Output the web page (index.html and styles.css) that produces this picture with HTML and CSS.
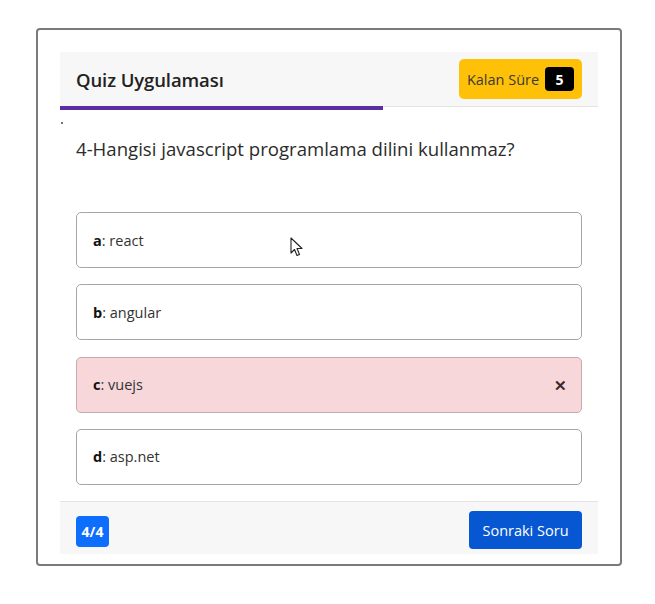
FILE: index.html
```html
<!DOCTYPE html>
<html lang="tr">
<head>
<meta charset="utf-8">
<title>Quiz Uygulaması</title>
<link rel="stylesheet" href="styles.css">
</head>
<body>
<div class="frame">
  <div class="card">
    <div class="card-header">
      <h1 class="title">Quiz Uygulaması</h1>
      <div class="timer">Kalan Süre <span class="timer-num">5</span></div>
    </div>
    <div class="progress"><div class="progress-bar" style="width: 60%"></div></div>
    <div class="card-body">
      <span class="dot"></span>
      <h2 class="question">4-Hangisi javascript programlama dilini kullanmaz?</h2>
      <div class="options">
        <div class="option"><span><b>a</b>: react</span></div>
        <div class="option"><span><b>b</b>: angular</span></div>
        <div class="option option-wrong"><span><b>c</b>: vuejs</span><span class="cross">✕</span></div>
        <div class="option"><span><b>d</b>: asp.net</span></div>
      </div>
      <svg class="cursor" width="13" height="21" viewBox="0 0 13 21"><path d="M1 1 L1 16 L4.5 12.5 L7 18.5 L9.5 17.5 L7 11.5 L12 11.5 Z" fill="#fff" stroke="#222" stroke-width="1.1" stroke-linejoin="round"/></svg>
    </div>
    <div class="card-footer">
      <span class="count">4/4</span>
      <button class="next">Sonraki Soru</button>
    </div>
  </div>
</div>
</body>
</html>
```

FILE: styles.css
```css
* { box-sizing: border-box; }
html, body { margin: 0; padding: 0; background: #fff; }
body {
  font-family: "Open Sans", "Noto Sans", sans-serif;
  color: #212529;
  padding: 28px 0 0 36px;
}
.frame {
  width: 586px;
  height: 538px;
  border: 2px solid #7a7a7a;
  border-radius: 4px;
  padding: 22px 22px 0 22px;
}
.card {
  width: 538px;
  display: flex;
  flex-direction: column;
}
.card-header {
  height: 55px;
  background: #f7f7f7;
  border-bottom: 1px solid #e4e4e4;
  display: flex;
  align-items: center;
  justify-content: space-between;
  padding: 0 16px;
}
.title {
  margin: 0;
  font-size: 18.5px;
  font-weight: 600;
  color: #222;
  letter-spacing: -0.1px;
}
.timer {
  background: #ffc107;
  color: #3a3a3a;
  border-radius: 5px;
  height: 40px;
  width: 123px;
  display: flex;
  align-items: center;
  justify-content: center;
  gap: 6px;
  font-size: 14.5px;
}
.timer-num {
  background: #000;
  color: #fff;
  font-weight: 700;
  font-size: 14px;
  border-radius: 4px;
  width: 29px;
  height: 24px;
  display: inline-flex;
  align-items: center;
  justify-content: center;
}
.progress {
  height: 4px;
  margin-top: -1px;
}
.progress-bar {
  height: 4px;
  background: #5b2ea4;
}
.card-body {
  position: relative;
  height: 392px;
  padding: 0 16px;
  border-bottom: 1px solid #e4e4e4;
}
.dot {
  position: absolute;
  left: 1px;
  top: 12px;
  width: 2px;
  height: 2px;
  background: #777;
}
.question {
  margin: 0;
  padding-top: 27px;
  font-size: 18.6px;
  font-weight: 400;
  color: #2b2b2b;
  line-height: 24px;
}
.options {
  margin-top: 51px;
  display: flex;
  flex-direction: column;
  gap: 16.3px;
}
.option {
  height: 56px;
  border: 1.5px solid #a6a6a6;
  border-radius: 5px;
  padding: 0 16px;
  display: flex;
  align-items: center;
  justify-content: space-between;
  font-size: 14.5px;
  color: #333;
  background: #fff;
}
.option b { color: #111; font-weight: 700; }
.option-wrong {
  background: #f8d7da;
  border-color: #c9a9ac;
}
.cross {
  font-size: 15px;
  font-weight: 600;
  color: #3a2b2b;
  margin-right: -2px;
}
.cursor {
  position: absolute;
  left: 230px;
  top: 127px;
}
.card-footer {
  height: 52px;
  background: #f7f7f7;
  display: flex;
  align-items: center;
  justify-content: space-between;
  padding: 0 16px;
}
.count {
  background: #0d6efd;
  color: #fff;
  font-weight: 700;
  font-size: 14px;
  border-radius: 4px;
  width: 33px;
  height: 31px;
  display: inline-flex;
  align-items: center;
  justify-content: center;
  margin-top: 6px;
}
.next {
  background: #0757d3;
  color: #fff;
  border: none;
  border-radius: 4px;
  width: 113px;
  height: 38px;
  font-family: inherit;
  font-size: 14.5px;
  padding: 0;
  margin-top: 4px;
}
```
